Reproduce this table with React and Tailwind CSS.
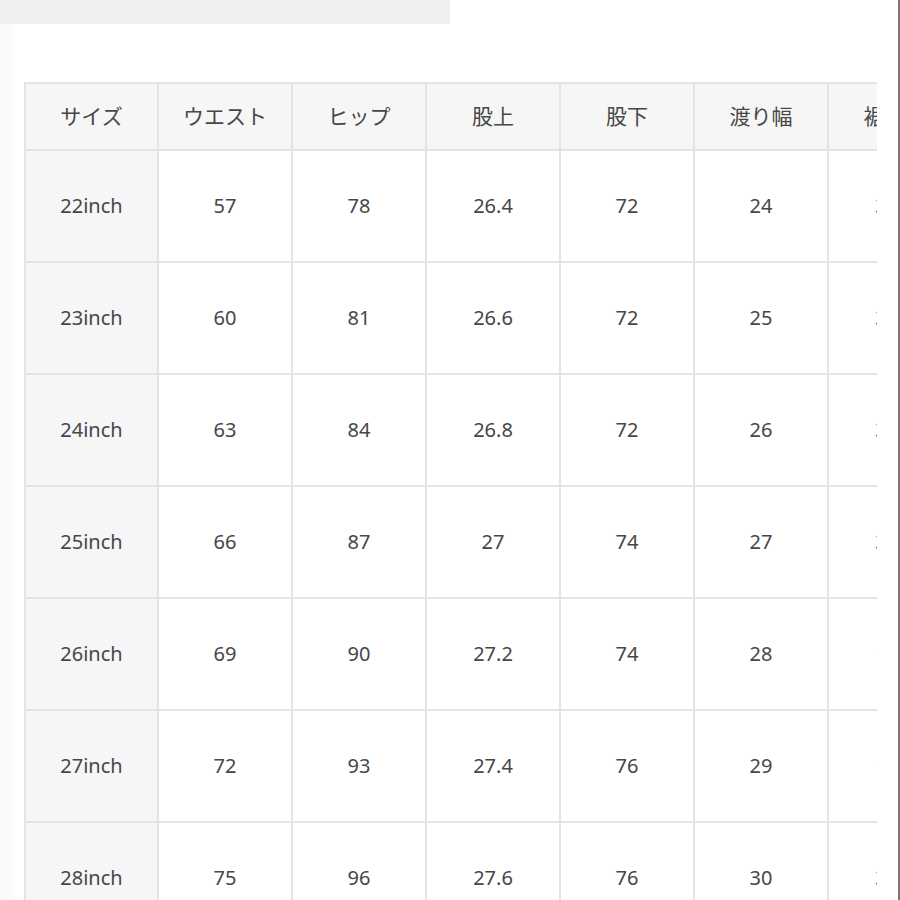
const headers = ['サイズ', 'ウエスト', 'ヒップ', '股上', '股下', '渡り幅', '裾周り']

const rows = [
  ['22inch', '57', '78', '26.4', '72', '24', '33.5'],
  ['23inch', '60', '81', '26.6', '72', '25', '34.5'],
  ['24inch', '63', '84', '26.8', '72', '26', '35.5'],
  ['25inch', '66', '87', '27', '74', '27', '36.5'],
  ['26inch', '69', '90', '27.2', '74', '28', '17.5'],
  ['27inch', '72', '93', '27.4', '76', '29', '18.5'],
  ['28inch', '75', '96', '27.6', '76', '30', '39.5'],
]

const font = { fontFamily: '"Noto Sans", "Noto Sans CJK JP", sans-serif' }

export default function App() {
  return (
    <div className="flex w-[900px] h-[900px] bg-white overflow-hidden" style={font}>
      <div className="flex-1 flex flex-col">
        <div className="w-[450px] h-[24px] bg-[#efefef] shrink-0" />
        <div className="flex flex-1">
          <div className="w-[14px] bg-gradient-to-r from-[#f9f9f9] to-[#fdfdfd]" />
          <div className="flex-1 pt-[58px] pl-[10px]">
            <div className="w-[853px] overflow-hidden">
              <div className="grid grid-cols-[133px_134px_134px_134px_134px_134px_134px] w-max border-t-2 border-l-2 border-[#e4e4e4] text-[#474747] text-[20px]">
                {headers.map((h) => (
                  <div key={h} className="h-[67px] flex items-center justify-center bg-[#f6f6f6] border-r-2 border-b-2 border-[#e4e4e4] text-[21px]">
                    {h}
                  </div>
                ))}
                {rows.map((r) =>
                  r.map((v, i) => (
                    <div
                      key={r[0] + i}
                      className={`h-[112px] flex items-center justify-center border-r-2 border-b-2 border-[#e4e4e4] ${i === 0 ? 'bg-[#f6f6f6]' : 'bg-white'}`}
                    >
                      {v}
                    </div>
                  ))
                )}
              </div>
            </div>
          </div>
        </div>
      </div>
      <div className="w-[2px] bg-[#777]" />
    </div>
  )
}
